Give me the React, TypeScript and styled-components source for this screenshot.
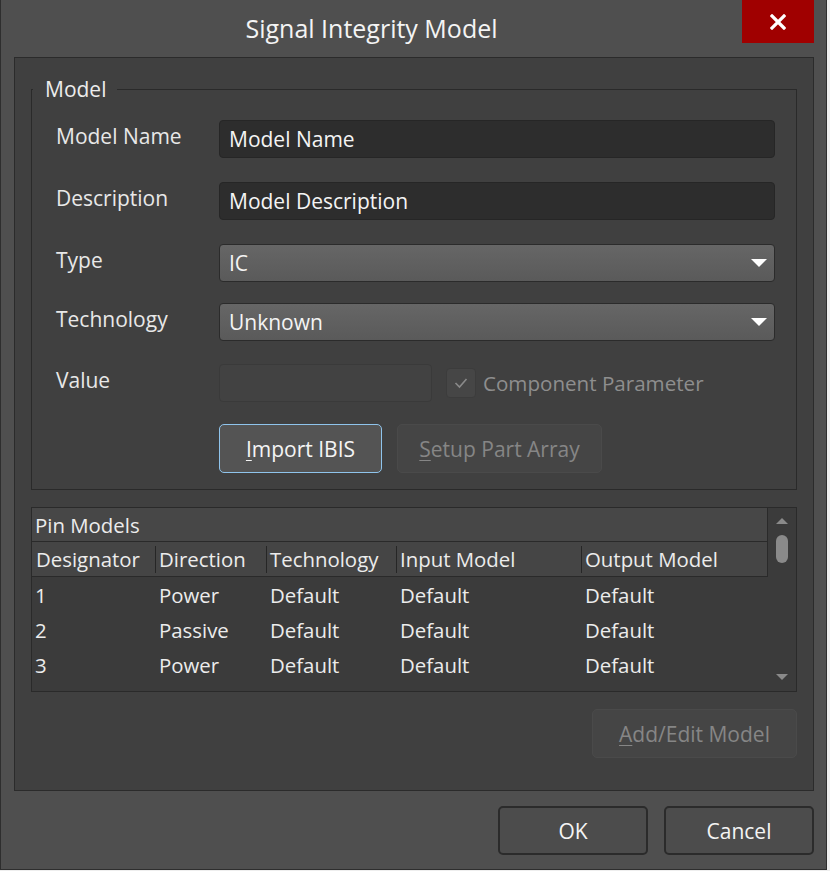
import React from "react";
import styled, { createGlobalStyle, css } from "styled-components";

const GlobalStyle = createGlobalStyle`
  html, body { margin: 0; padding: 0; background: #eeeeee; }
  * { box-sizing: border-box; }
`;

const Window = styled.div`
  width: 827px;
  height: 870px;
  background: #4f4f4f;
  border-left: 1px solid #2e2e2e;
  border-right: 1px solid #2e2e2e;
  border-bottom: 1px solid #2e2e2e;
  display: flex;
  flex-direction: column;
  font-family: "Open Sans", "Noto Sans", sans-serif;
  color: #eeeeee;
`;

const TitleBar = styled.div`
  height: 57px;
  display: flex;
  flex-shrink: 0;
`;

const Title = styled.div`
  flex: 1;
  text-align: center;
  font-size: 25px;
  line-height: 56px;
  color: #f4f4f4;
`;

const CloseButton = styled.div`
  width: 72px;
  height: 43px;
  margin-right: 12px;
  background: #a00000;
  display: flex;
  align-items: center;
  justify-content: center;
`;

const Panel = styled.div`
  margin: 0 12px 0 13px;
  height: 734px;
  flex-shrink: 0;
  background: #404040;
  border: 1px solid #2b2b2b;
  padding: 16px 16px 0 16px;
  display: flex;
  flex-direction: column;
`;

const Group = styled.fieldset`
  margin: 0;
  padding: 0 21px 16px 24px;
  border: 1px solid #2a2a2a;
  min-width: 0;
`;

const Legend = styled.legend`
  margin-left: -23px;
  padding: 0 11px 0 12px;
  font-size: 21px;
  line-height: 30px;
  color: #ececec;
`;

const Row = styled.div<{ $top: number; $h?: number }>`
  display: grid;
  grid-template-columns: 163px 1fr;
  align-items: center;
  height: ${(p) => p.$h ?? 38}px;
  margin-top: ${(p) => p.$top}px;
`;

const Label = styled.div`
  font-size: 21px;
  color: #e8e8e8;
  padding-bottom: 6px;
  white-space: nowrap;
`;

const fieldBase = css`
  height: 38px;
  border-radius: 4px;
  display: flex;
  align-items: center;
  padding-left: 9px;
  font-size: 21px;
  color: #f4f4f4;
  white-space: nowrap;
`;

const TextField = styled.div`
  ${fieldBase};
  background: #2d2d2d;
  border: 1px solid #262626;
`;

const SelectField = styled.div`
  ${fieldBase};
  justify-content: space-between;
  padding-right: 7px;
  background: linear-gradient(#666666, #5a5a5a);
  border: 1px solid #2b2b2b;
`;

const Arrow = styled.div`
  width: 0;
  height: 0;
  border-left: 8px solid transparent;
  border-right: 8px solid transparent;
  border-top: 8px solid #ffffff;
`;

const ValueLine = styled.div`
  display: flex;
  align-items: center;
`;

const DisabledField = styled.div`
  ${fieldBase};
  width: 213px;
  background: #424242;
  border: 1px solid #3a3a3a;
`;

const CheckBox = styled.div`
  width: 30px;
  height: 30px;
  margin-left: 14px;
  border-radius: 4px;
  background: #464646;
  border: 1px solid #3c3c3c;
  display: flex;
  align-items: center;
  justify-content: center;
`;

const CheckLabel = styled.div`
  margin-left: 7px;
  font-size: 20.6px;
  color: #8e8e8e;
  white-space: nowrap;
`;

const ButtonLine = styled.div`
  display: flex;
  gap: 15px;
`;

const Button = styled.div<{ $w: number; $variant?: "normal" | "focus" | "disabled" }>`
  width: ${(p) => p.$w}px;
  height: 49px;
  border-radius: 5px;
  display: flex;
  align-items: center;
  justify-content: center;
  font-size: 21px;
  white-space: nowrap;
  ${(p) =>
    p.$variant === "focus"
      ? css`
          background: #545454;
          border: 1.5px solid #8fc4ec;
          color: #f4f4f4;
        `
      : p.$variant === "disabled"
      ? css`
          background: #454545;
          border: 1px solid #4a4a4a;
          color: #868686;
        `
      : css`
          background: #4c4c4c;
          border: 2px solid #2b2b2b;
          color: #f4f4f4;
        `}
  u {
    text-decoration: underline;
    text-underline-offset: 3px;
    text-decoration-thickness: 1px;
  }
`;

const Table = styled.div`
  margin-top: 17px;
  height: 185px;
  border: 1px solid #2a2a2a;
  background: #3b3b3b;
  display: flex;
  font-size: 20.4px;
`;

const TableMain = styled.div`
  flex: 1;
  display: flex;
  flex-direction: column;
`;

const TableTitle = styled.div`
  height: 34px;
  background: #474747;
  border-bottom: 1px solid #2a2a2a;
  border-right: 1px solid #2a2a2a;
  padding-left: 3px;
  display: flex;
  align-items: center;
  color: #ececec;
`;

const cols = "123px 111px 130px 185px 1fr";

const HeaderRow = styled.div`
  height: 35px;
  background: #454545;
  border-bottom: 1px solid #2a2a2a;
  border-right: 1px solid #2a2a2a;
  display: grid;
  grid-template-columns: ${cols};
  align-items: center;
`;

const HeaderCell = styled.div<{ $first?: boolean }>`
  height: 27px;
  display: flex;
  align-items: center;
  padding-left: 3px;
  border-left: 1px solid ${(p) => (p.$first ? "transparent" : "#262626")};
  color: #ececec;
  white-space: nowrap;
  overflow: hidden;
`;

const BodyRow = styled.div`
  height: 35px;
  display: grid;
  grid-template-columns: ${cols};
  align-items: center;
`;

const BodyCell = styled.div<{ $first?: boolean }>`
  padding-left: ${(p) => (p.$first ? 3 : 4)}px;
  color: #ececec;
  white-space: nowrap;
`;

const ScrollBar = styled.div`
  width: 28px;
  display: flex;
  flex-direction: column;
  align-items: center;
  padding: 10px 0 11px;
`;

const ArrowUp = styled.div`
  width: 0;
  height: 0;
  border-left: 6px solid transparent;
  border-right: 6px solid transparent;
  border-bottom: 6px solid #8a8a8a;
`;

const ArrowDown = styled.div`
  width: 0;
  height: 0;
  margin-top: auto;
  border-left: 6px solid transparent;
  border-right: 6px solid transparent;
  border-top: 6px solid #8a8a8a;
`;

const Thumb = styled.div`
  width: 12px;
  height: 28px;
  margin-top: 11px;
  border-radius: 6px;
  background: #8a8a8a;
`;

const ActionRow = styled.div`
  display: flex;
  justify-content: flex-end;
  margin-top: 17px;
`;

const Footer = styled.div`
  display: flex;
  justify-content: flex-end;
  gap: 16px;
  padding: 15px 12px 0 0;
`;

const rows = [
  ["1", "Power", "Default", "Default", "Default"],
  ["2", "Passive", "Default", "Default", "Default"],
  ["3", "Power", "Default", "Default", "Default"],
];

export default function App() {
  return (
    <>
      <GlobalStyle />
      <Window>
        <TitleBar>
          <Title>Signal Integrity Model</Title>
          <CloseButton>
            <svg width="16" height="16" viewBox="0 0 16 16">
              <path d="M2 2 L14 14 M14 2 L2 14" stroke="#ffffff" strokeWidth="3.2" strokeLinecap="square" />
            </svg>
          </CloseButton>
        </TitleBar>
        <Panel>
          <Group>
            <Legend>Model</Legend>
            <Row $top={16}>
              <Label>Model Name</Label>
              <TextField>Model Name</TextField>
            </Row>
            <Row $top={24}>
              <Label>Description</Label>
              <TextField>Model Description</TextField>
            </Row>
            <Row $top={24}>
              <Label>Type</Label>
              <SelectField>
                IC
                <Arrow />
              </SelectField>
            </Row>
            <Row $top={21}>
              <Label>Technology</Label>
              <SelectField>
                Unknown
                <Arrow />
              </SelectField>
            </Row>
            <Row $top={23}>
              <Label>Value</Label>
              <ValueLine>
                <DisabledField />
                <CheckBox>
                  <svg width="14" height="12" viewBox="0 0 14 12">
                    <polyline points="1.5,6 5.5,10 12.5,2" fill="none" stroke="#8a8a8a" strokeWidth="1.6" />
                  </svg>
                </CheckBox>
                <CheckLabel>Component Parameter</CheckLabel>
              </ValueLine>
            </Row>
            <Row $top={22} $h={49}>
              <span />
              <ButtonLine>
                <Button $w={163} $variant="focus">
                  <span>
                    <u>I</u>mport IBIS
                  </span>
                </Button>
                <Button $w={205} $variant="disabled">
                  <span>
                    <u>S</u>etup Part Array
                  </span>
                </Button>
              </ButtonLine>
            </Row>
          </Group>
          <Table>
            <TableMain>
              <TableTitle>Pin Models</TableTitle>
              <HeaderRow>
                <HeaderCell $first>Designator</HeaderCell>
                <HeaderCell>Direction</HeaderCell>
                <HeaderCell>Technology</HeaderCell>
                <HeaderCell>Input Model</HeaderCell>
                <HeaderCell>Output Model</HeaderCell>
              </HeaderRow>
              {rows.map((r) => (
                <BodyRow key={r[0]}>
                  <BodyCell $first>{r[0]}</BodyCell>
                  <BodyCell>{r[1]}</BodyCell>
                  <BodyCell>{r[2]}</BodyCell>
                  <BodyCell>{r[3]}</BodyCell>
                  <BodyCell>{r[4]}</BodyCell>
                </BodyRow>
              ))}
            </TableMain>
            <ScrollBar>
              <ArrowUp />
              <Thumb />
              <ArrowDown />
            </ScrollBar>
          </Table>
          <ActionRow>
            <Button $w={205} $variant="disabled">
              <span>
                <u>A</u>dd/Edit Model
              </span>
            </Button>
          </ActionRow>
        </Panel>
        <Footer>
          <Button $w={150}>OK</Button>
          <Button $w={150}>Cancel</Button>
        </Footer>
      </Window>
    </>
  );
}
